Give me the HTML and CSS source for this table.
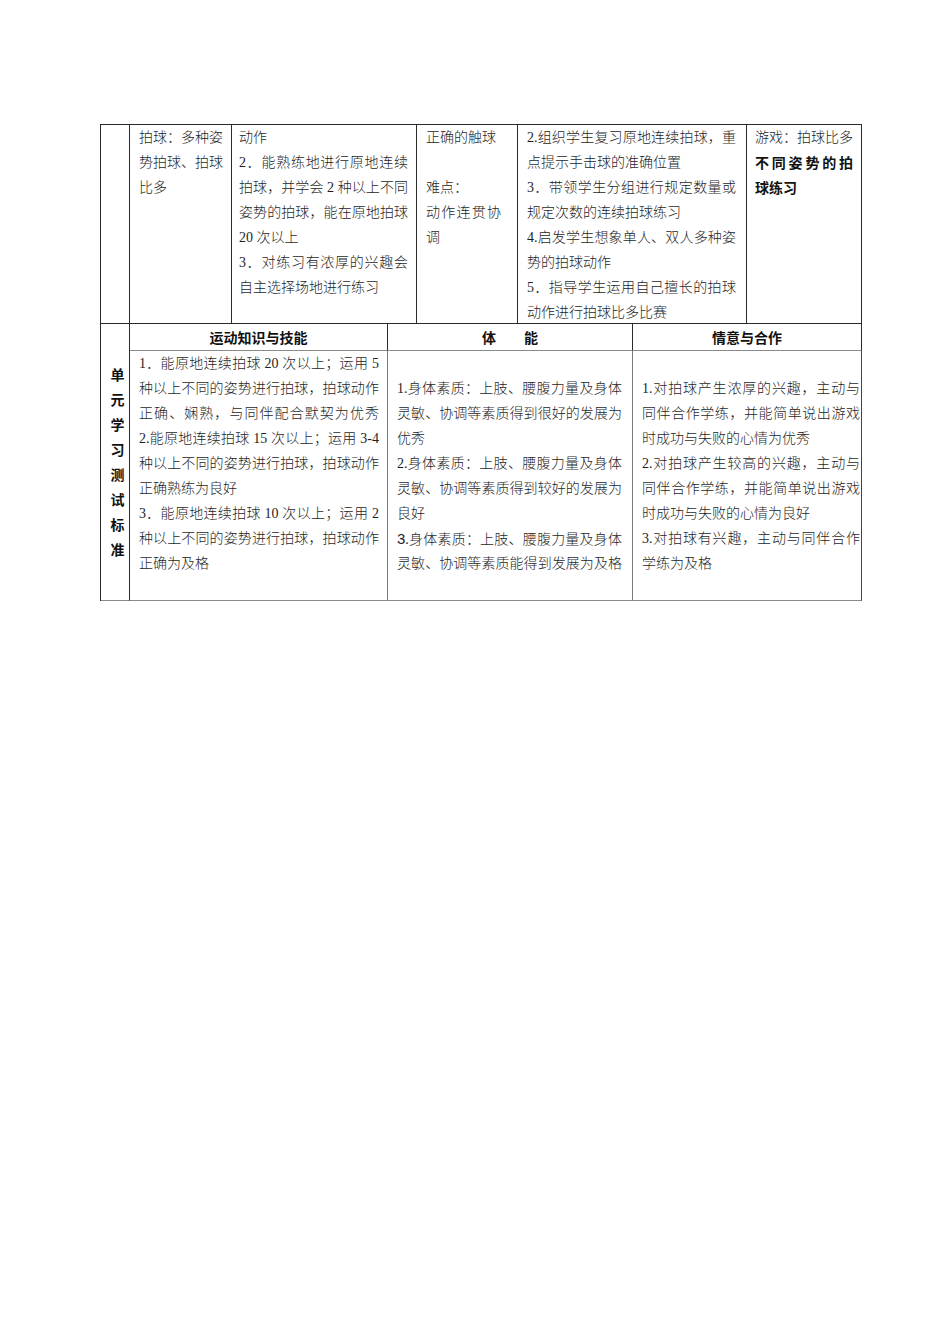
FILE: index.html
```html
<!DOCTYPE html>
<html lang="zh-CN">
<head>
<meta charset="utf-8">
<title>单元教学计划</title>
<link rel="stylesheet" href="styles.css">
</head>
<body>
<div class="doc">
  <div class="sheet">
    <div class="row-top">
      <div class="cell c1"></div>
      <div class="cell c2">
        <div class="l j">拍球：多种姿</div>
        <div class="l j">势拍球、拍球</div>
        <div class="l">比多</div>
      </div>
      <div class="cell c3">
        <div class="l">动作</div>
        <div class="l j">2．能熟练地进行原地连续</div>
        <div class="l j">拍球，并学会 2 种以上不同</div>
        <div class="l j">姿势的拍球，能在原地拍球</div>
        <div class="l">20 次以上</div>
        <div class="l j">3．对练习有浓厚的兴趣会</div>
        <div class="l">自主选择场地进行练习</div>
      </div>
      <div class="cell c4">
        <div class="l">正确的触球</div>
        <div class="l">&nbsp;</div>
        <div class="l">难点：</div>
        <div class="l j">动作连贯协</div>
        <div class="l">调</div>
      </div>
      <div class="cell c5">
        <div class="l j">2.组织学生复习原地连续拍球，重</div>
        <div class="l">点提示手击球的准确位置</div>
        <div class="l j">3．带领学生分组进行规定数量或</div>
        <div class="l">规定次数的连续拍球练习</div>
        <div class="l j">4.启发学生想象单人、双人多种姿</div>
        <div class="l">势的拍球动作</div>
        <div class="l j">5．指导学生运用自己擅长的拍球</div>
        <div class="l">动作进行拍球比多比赛</div>
      </div>
      <div class="cell c6">
        <div class="l">游戏：拍球比多</div>
        <div class="l j strong">不同姿势的拍</div>
        <div class="l strong">球练习</div>
      </div>
    </div>

    <div class="row-std">
      <div class="cell side"><span class="vlabel">单元学习测试标准</span></div>
      <div class="cell head">运动知识与技能</div>
      <div class="cell head">体　　能</div>
      <div class="cell head">情意与合作</div>
      <div class="cell body b2">
        <div class="l j">1．能原地连续拍球 20 次以上；运用 5</div>
        <div class="l j">种以上不同的姿势进行拍球，拍球动作</div>
        <div class="l j">正确、娴熟，与同伴配合默契为优秀</div>
        <div class="l j">2.能原地连续拍球 15 次以上；运用 3-4</div>
        <div class="l j">种以上不同的姿势进行拍球，拍球动作</div>
        <div class="l">正确熟练为良好</div>
        <div class="l j">3．能原地连续拍球 10 次以上；运用 2</div>
        <div class="l j">种以上不同的姿势进行拍球，拍球动作</div>
        <div class="l">正确为及格</div>
      </div>
      <div class="cell body b3">
        <div class="l">&nbsp;</div>
        <div class="l j">1.身体素质：上肢、腰腹力量及身体</div>
        <div class="l j">灵敏、协调等素质得到很好的发展为</div>
        <div class="l">优秀</div>
        <div class="l j">2.身体素质：上肢、腰腹力量及身体</div>
        <div class="l j">灵敏、协调等素质得到较好的发展为</div>
        <div class="l">良好</div>
        <div class="l j"><span class="num">3</span>.身体素质：上肢、腰腹力量及身体</div>
        <div class="l j">灵敏、协调等素质能得到发展为及格</div>
      </div>
      <div class="cell body b4">
        <div class="l">&nbsp;</div>
        <div class="l j">1.对拍球产生浓厚的兴趣，主动与</div>
        <div class="l j">同伴合作学练，并能简单说出游戏</div>
        <div class="l">时成功与失败的心情为优秀</div>
        <div class="l j">2.对拍球产生较高的兴趣，主动与</div>
        <div class="l j">同伴合作学练，并能简单说出游戏</div>
        <div class="l">时成功与失败的心情为良好</div>
        <div class="l j">3.对拍球有兴趣，主动与同伴合作</div>
        <div class="l">学练为及格</div>
      </div>
    </div>
  </div>
</div>
</body>
</html>
```

FILE: styles.css
```css
html, body {
  margin: 0;
  padding: 0;
  background: #ffffff;
}

.doc {
  padding: 124px 0 0 100px;
  font-family: "Liberation Serif", "Noto Sans CJK SC", serif;
  font-size: 14px;
  font-weight: 300;
  color: #1e1e1e;
}

.sheet {
  width: 762px;
  box-sizing: border-box;
  border-left: 1px solid #2a2a2a;
  border-top: 1px solid #2a2a2a;
}

.cell {
  box-sizing: border-box;
  border-right: 1px solid #2a2a2a;
  border-bottom: 1px solid #2a2a2a;
  overflow: hidden;
}

.l {
  height: 25px;
  line-height: 25px;
}

.j {
  text-align: justify;
  text-align-last: justify;
}

.strong {
  font-family: "Noto Sans CJK SC", sans-serif;
  font-weight: 700;
  color: #111;
}

/* top row */
.row-top {
  display: grid;
  grid-template-columns: 29px 102px 185px 101px 229px 115px;
  grid-template-rows: 199px;
}

.c2 { padding: 0 8px 0 9px; }
.c3 { padding: 0 8px 0 7px; }
.c4 { padding: 0 16px 0 9px; }
.c5 { padding: 0 10px 0 9px; }
.c6 { padding: 0 8px 0 8px; }

/* standards block */
.row-std {
  display: grid;
  grid-template-columns: 29px 258px 245px 229px;
  grid-template-rows: 27px 250px;
}

.side {
  grid-row: 1 / 3;
  display: flex;
  align-items: center;
  justify-content: center;
  padding-left: 5px;
  border-bottom-color: #8a8a8a;
}

.vlabel {
  width: 14px;
  line-height: 25px;
  font-family: "Noto Sans CJK SC", sans-serif;
  font-weight: 700;
  color: #111;
  word-break: break-all;
}

.head {
  line-height: 26px;
  text-align: center;
  font-family: "Noto Sans CJK SC", sans-serif;
  font-weight: 700;
  color: #111;
  border-bottom-color: #8a8a8a;
}

.body {
  border-bottom-color: #8a8a8a;
  border-right-color: #7a7a7a;
}

.b4 { border-right-color: #444; }

.b2 { padding: 0 8px 0 9px; }
.b3 { padding: 0 10px 0 9px; }
.b4 { padding: 0 1px 0 9px; }

.num {
  font-family: "Liberation Sans", sans-serif;
  font-size: 15px;
}
```
